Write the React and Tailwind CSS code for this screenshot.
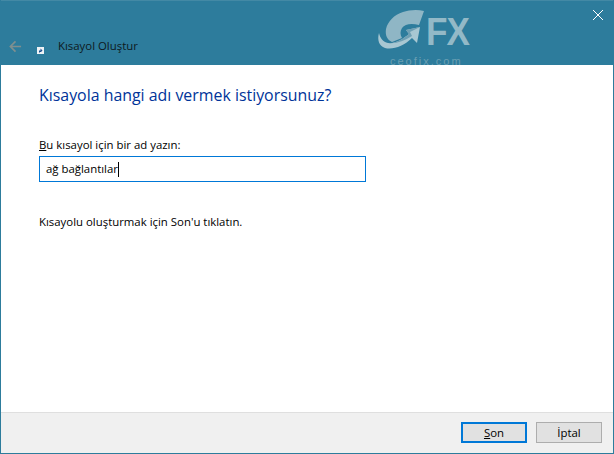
import React from 'react';

function Logo() {
  return (
    <div className="absolute left-[376px] top-[8px] w-[100px] h-[58px] pointer-events-none">
      <svg className="absolute left-0 top-0" width="56" height="46" viewBox="0 0 56 46">
        {/* C with swoosh and arrow */}
        <path d="M48 3 C41 1 33 2 27 4 C18 7 12 13 10 21 C9 27 11 32 16 34 L26 30 C24 27 24 23 26 20 C29 16 35 15 43 17 Z" fill="#8fb6c5" />
        <path d="M3 25 C1 32 3 38 9 40 C17 42 28 38 36 30 L41 35 L44 19 L30 22 L33 26 C27 31 19 36 12 35 C7 34 4 30 3 25 Z" fill="#a8c7d2" />
        <path d="M12 35 C19 36 27 31 33 26 L30 22 L44 19 L34 24 L36 28 C28 33 20 36 12 35 Z" fill="#6f9fb3" />
      </svg>
      <span className="absolute left-[50px] top-[10px] font-['Liberation_Sans',sans-serif] font-bold text-[39px] leading-[28px] tracking-[-1px] text-[#93b9c7] scale-x-[0.9] origin-left">FX</span>
      <span className="absolute left-[14px] top-[47px] font-['Liberation_Sans',sans-serif] text-[11px] leading-[13px] tracking-[2px] text-[#6a9fb3]">ceofix.com</span>
    </div>
  );
}

export default function App() {
  return (
    <div className="relative w-[614px] h-[454px] overflow-hidden bg-[#2d7c9c] px-px pb-px flex flex-col font-['Open_Sans',sans-serif] text-[11.4px] text-black">
      {/* Title bar */}
      <header className="h-[65px] shrink-0 border-t border-[#4389a5] flex items-end pb-[9px] relative">
        <svg className="ml-[8px] mb-[3px]" width="13" height="13" viewBox="0 0 14 14" fill="none" stroke="#7f8f8f" strokeWidth="1.8">
          <path d="M13 7H1.5M7 1.5L1.5 7L7 12.5" />
        </svg>
        <svg className="ml-[15px] mb-[2px]" width="7" height="7" viewBox="0 0 7 7">
          <rect width="7" height="7" fill="#eef2f5" />
          <path d="M2 6 L2 3.5 L3.5 3.5 L3.5 1.5 L5.5 3.5 L4 5 L3 5 Z" fill="#1c4f8f" />
        </svg>
        <span className="ml-[14px] text-[11.4px] leading-[20px] text-[#0d1a20]">Kısayol Oluştur</span>
      </header>
      <Logo />
      <svg className="absolute left-[593px] top-[10px]" width="10" height="10" viewBox="0 0 10 10" stroke="#ffffff" strokeWidth="1">
        <path d="M0 0L10 10M10 0L0 10" />
      </svg>

      {/* Content */}
      <main className="flex-1 bg-white pl-[38px] flex flex-col">
        <h1 className="mt-[19px] text-[15.9px] leading-[22px] text-[#003399] font-normal">Kısayola hangi adı vermek istiyorsunuz?</h1>
        <label className="mt-[30px] leading-[17px]"><span className="underline">B</span>u kısayol için bir ad yazın:</label>
        <div className="mt-[3px] w-[327px] h-[26px] border border-[#0078d7] flex items-center pl-[6px]">
          <span>ağ bağlantılar</span>
          <span className="w-px h-[15px] bg-black" />
        </div>
        <p className="mt-[31px] leading-[17px]">Kısayolu oluşturmak için Son'u tıklatın.</p>
      </main>

      {/* Footer */}
      <footer className="h-[41px] shrink-0 bg-[#f0f0f0] border-t border-[#dfdfdf] flex justify-end items-start pt-[9px] pr-[11px] gap-[9px]">
        <button className="w-[66px] h-[21px] border-2 border-[#0078d7] bg-[#e1e1e1] leading-[17px]"><span className="underline">S</span>on</button>
        <button className="w-[66px] h-[21px] border border-[#adadad] bg-[#e1e1e1] leading-[17px]">İptal</button>
      </footer>
    </div>
  );
}
